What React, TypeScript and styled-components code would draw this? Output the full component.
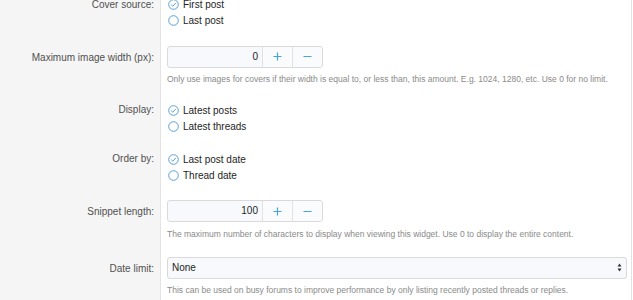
import React from 'react';
import styled, { createGlobalStyle } from 'styled-components';

const GlobalStyle = createGlobalStyle`
  html, body {
    margin: 0;
    padding: 0;
    background: #ffffff;
    overflow: hidden;
  }
  body {
    font-family: 'Liberation Sans', Arial, sans-serif;
  }
`;

const Form = styled.div`
  width: 631px;
  margin-top: -12px;
  border-right: 1px solid #e2e2e2;
  background: linear-gradient(to right, #f5f5f5 0, #f5f5f5 160px, #e4e4e4 160px, #e4e4e4 161px, #fff 161px);
`;

const Row = styled.div`
  display: grid;
  grid-template-columns: 161px 1fr;
  padding: 8.5px 0;
`;

const Label = styled.div<{ $center?: boolean }>`
  text-align: right;
  padding-right: 7px;
  font-size: 10px;
  color: #505050;
  line-height: 16px;
  padding-top: ${p => (p.$center ? '4px' : '0')};
`;

const Field = styled.div`
  padding-left: 6px;
  padding-right: 4px;
`;

const RadioList = styled.div`
  display: flex;
  flex-direction: column;
`;

const RadioItem = styled.label`
  display: flex;
  align-items: center;
  gap: 4px;
  height: 16px;
  font-size: 10px;
  color: #1e1e1e;
  padding-left: 1px;
`;

const NumberBox = styled.div`
  display: flex;
  width: 156px;
  height: 22px;
  box-sizing: border-box;
  border: 1px solid #dadada;
  border-radius: 3px;
  background: #f7f9fc;
  overflow: hidden;
`;

const NumberValue = styled.div`
  flex: 1;
  text-align: right;
  padding-right: 4px;
  font-size: 10px;
  line-height: 20px;
  color: #1e1e1e;
`;

const StepButton = styled.div`
  width: 29px;
  border-left: 1px solid #e2e2e2;
  display: flex;
  align-items: center;
  justify-content: center;
  background: #fafbfc;
`;

const Hint = styled.div`
  margin-top: 5.5px;
  font-size: 8.5px;
  white-space: nowrap;
  color: #8a8a8a;
  line-height: 12px;
`;

const Select = styled.div`
  display: flex;
  align-items: center;
  justify-content: space-between;
  height: 22px;
  box-sizing: border-box;
  border: 1px solid #dadada;
  border-radius: 3px;
  background: #f7f9fc;
  padding: 0 4px 0 4px;
  font-size: 10px;
  color: #1e1e1e;
`;

const RadioIcon = ({ checked }: { checked: boolean }) => (
  <svg width="11" height="11" viewBox="0 0 11 11">
    <circle cx="5.5" cy="5.5" r="4.8" fill="none" stroke="#5a9fd6" strokeWidth="1" />
    {checked && (
      <path d="M3.2 5.7 L4.8 7.2 L7.8 4" fill="none" stroke="#5a9fd6" strokeWidth="1" />
    )}
  </svg>
);

const Radios = ({ items, selected }: { items: string[]; selected: number }) => (
  <RadioList>
    {items.map((t, i) => (
      <RadioItem key={t}>
        <RadioIcon checked={i === selected} />
        {t}
      </RadioItem>
    ))}
  </RadioList>
);

const Stepper = ({ value }: { value: string }) => (
  <NumberBox>
    <NumberValue>{value}</NumberValue>
    <StepButton>
      <svg width="9" height="9" viewBox="0 0 9 9">
        <path d="M4.5 0.5 V8.5 M0.5 4.5 H8.5" stroke="#47a2e0" strokeWidth="1.2" />
      </svg>
    </StepButton>
    <StepButton>
      <svg width="9" height="9" viewBox="0 0 9 9">
        <path d="M0.5 4.5 H8.5" stroke="#47a2e0" strokeWidth="1.2" />
      </svg>
    </StepButton>
  </NumberBox>
);

export default function App() {
  return (
    <>
      <GlobalStyle />
      <Form>
        <Row>
          <Label>Cover source:</Label>
          <Field>
            <Radios items={['First post', 'Last post']} selected={0} />
          </Field>
        </Row>
        <Row>
          <Label $center>Maximum image width (px):</Label>
          <Field>
            <Stepper value="0" />
            <Hint>
              Only use images for covers if their width is equal to, or less than, this amount. E.g. 1024, 1280, etc. Use 0 for no limit.
            </Hint>
          </Field>
        </Row>
        <Row>
          <Label>Display:</Label>
          <Field>
            <Radios items={['Latest posts', 'Latest threads']} selected={0} />
          </Field>
        </Row>
        <Row>
          <Label>Order by:</Label>
          <Field>
            <Radios items={['Last post date', 'Thread date']} selected={0} />
          </Field>
        </Row>
        <Row>
          <Label $center>Snippet length:</Label>
          <Field>
            <Stepper value="100" />
            <Hint>
              The maximum number of characters to display when viewing this widget. Use 0 to display the entire content.
            </Hint>
          </Field>
        </Row>
        <Row>
          <Label $center>Date limit:</Label>
          <Field>
            <Select>
              <span>None</span>
              <svg width="5" height="9" viewBox="0 0 5 9">
                <path d="M2.5 0.5 L4.5 3.5 H0.5 Z M2.5 8.5 L4.5 5.5 H0.5 Z" fill="#333" />
              </svg>
            </Select>
            <Hint>
              This can be used on busy forums to improve performance by only listing recently posted threads or replies.
            </Hint>
          </Field>
        </Row>
      </Form>
    </>
  );
}
